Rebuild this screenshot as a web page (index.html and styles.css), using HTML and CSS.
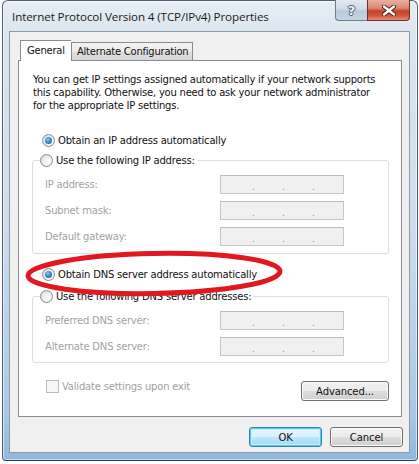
FILE: index.html
```html
<!DOCTYPE html>
<html>
<head>
<meta charset="utf-8">
<link rel="stylesheet" href="styles.css">
</head>
<body>
<div class="window">
  <div class="titlebar">
    <span class="title">Internet Protocol Version 4 (TCP/IPv4) Properties</span>
    <div class="caption-btns">
      <div class="cbtn help">?</div>
      <div class="cbtn close">
        <svg width="14" height="11" viewBox="0 0 14 11"><path d="M2 1.5 L12 9.5 M12 1.5 L2 9.5" stroke="#4a1a12" stroke-width="4.2" stroke-linecap="round"/><path d="M2 1.5 L12 9.5 M12 1.5 L2 9.5" stroke="#ffffff" stroke-width="2.4" stroke-linecap="round"/></svg>
      </div>
    </div>
  </div>
  <div class="client">
    <div class="tabs">
      <div class="tab active">General</div>
      <div class="tab">Alternate Configuration</div>
    </div>
    <div class="panel">
      <p class="intro">You can get IP settings assigned automatically if your network supports<br>this capability. Otherwise, you need to ask your network administrator<br>for the appropriate IP settings.</p>
      <div class="radio first"><span class="rb checked"></span>Obtain an IP address automatically</div>
      <fieldset class="group g1">
        <legend><span class="rb"></span>Use the following IP address:</legend>
        <div class="fields">
          <span class="lbl">IP address:</span><div class="ip"><i>.</i><i>.</i><i>.</i></div>
          <span class="lbl">Subnet mask:</span><div class="ip"><i>.</i><i>.</i><i>.</i></div>
          <span class="lbl">Default gateway:</span><div class="ip"><i>.</i><i>.</i><i>.</i></div>
        </div>
      </fieldset>
      <div class="radio dns"><span class="rb checked"></span>Obtain DNS server address automatically</div>
      <fieldset class="group g2">
        <legend><span class="rb"></span>Use the following DNS server addresses:</legend>
        <div class="fields">
          <span class="lbl">Preferred DNS server:</span><div class="ip"><i>.</i><i>.</i><i>.</i></div>
          <span class="lbl">Alternate DNS server:</span><div class="ip"><i>.</i><i>.</i><i>.</i></div>
        </div>
      </fieldset>
      <div class="footer">
        <div class="check"><span class="cb"></span>Validate settings upon exit</div>
        <div class="btn">Advanced...</div>
      </div>
    </div>
    <div class="dialog-btns">
      <div class="btn default">OK</div>
      <div class="btn">Cancel</div>
    </div>
  </div>
  <svg class="annotation" width="419" height="464" viewBox="0 0 419 464">
    <ellipse cx="154" cy="273.5" rx="126" ry="20" fill="none" stroke="#e01820" stroke-width="5" transform="rotate(-1 154 273.5)"/>
  </svg>
</div>
</body>
</html>
```

FILE: styles.css
```css
html, body {
  margin: 0;
  padding: 0;
  background: #ffffff;
}

body {
  font-family: "DejaVu Sans", sans-serif;
  font-size: 10px;
  color: #111;
}

.window {
  position: relative;
  box-sizing: border-box;
  margin-left: 2px;
  width: 416px;
  height: 461px;
  border: 1px solid #4d6073;
  border-bottom-color: #1d3f62;
  border-radius: 6px 6px 4px 4px;
  background: linear-gradient(to bottom, #e6edf4 0%, #dbe5ef 8%, #cddcec 50%, #a9c8e6 90%, #8fb7de 100%);
  box-shadow: inset 0 0 0 1px rgba(255,255,255,0.55);
}

.titlebar {
  height: 30px;
  display: flex;
  justify-content: space-between;
  align-items: flex-start;
  padding-left: 9px;
  padding-right: 7px;
}

.title {
  font-family: "Open Sans", sans-serif;
  font-size: 11.6px;
  color: #1a1a1a;
  line-height: 16px;
  margin-top: 8px;
  letter-spacing: -0.1px;
}

.caption-btns {
  display: flex;
  margin-top: -1px;
}

.cbtn {
  box-sizing: border-box;
  height: 21px;
  display: flex;
  align-items: center;
  justify-content: center;
}

.help {
  width: 32px;
  border: 1px solid #6d7e91;
  border-top: none;
  border-right: none;
  border-radius: 0 0 0 4px;
  background: linear-gradient(to bottom, #e2eaf2 0%, #cfdbe7 45%, #b8c9da 55%, #c6d5e4 100%);
  color: #f4f6f8;
  font-family: "DejaVu Sans", sans-serif;
  font-weight: bold;
  font-size: 13px;
  text-shadow: 0 0 1px #2d3d4e, 1px 0 0 #5a6878, -1px 0 0 #5a6878, 0 1px 0 #5a6878, 0 -1px 0 #5a6878;
}

.close {
  width: 43px;
  border: 1px solid #7a2a1f;
  border-top: none;
  border-radius: 0 0 4px 0;
  background: linear-gradient(to bottom, #eab0a2 0%, #d98a76 40%, #c4432c 55%, #cf5a40 80%, #e3907c 100%);
}

.client {
  box-sizing: border-box;
  margin: 0 7px 0 6px;
  height: 422px;
  border: 1px solid #8c9aaa;
  background: #f0f0f0;
  padding: 8px 7px 0 8px;
}

.tabs {
  display: flex;
  align-items: flex-end;
  padding-left: 2px;
  height: 20px;
  position: relative;
  z-index: 2;
}

.tab {
  box-sizing: border-box;
  border: 1px solid #898c95;
  border-bottom: none;
  padding: 0 4px 0 5px;
  height: 18px;
  line-height: 17px;
  white-space: nowrap;
  background: linear-gradient(to bottom, #f3f3f3 0%, #ebebeb 50%, #dedede 51%, #d7d7d7 100%);
  letter-spacing: -0.25px;
}

.tab.active {
  height: 21px;
  margin-bottom: -1px;
  background: #ffffff;
  border-right: none;
  padding: 0 6px 0 6px;
  line-height: 19px;
  width: 51px;
}

.panel {
  box-sizing: border-box;
  position: relative;
  border: 1px solid #898c95;
  background: #ffffff;
  height: 357px;
  padding: 0 12px 0 0;
}

.intro {
  margin: 0;
  padding: 12px 0 0 14px;
  line-height: 13px;
  white-space: nowrap;
  letter-spacing: -0.22px;
}

.radio, legend {
  display: flex;
  align-items: center;
  height: 16px;
  white-space: nowrap;
  letter-spacing: -0.2px;
}

.radio {
  margin-left: 23px;
}

.radio.first {
  margin-top: 20px;
}

.radio.dns {
  margin-top: 12px;
}

.rb {
  position: relative;
  box-sizing: border-box;
  width: 13px;
  height: 13px;
  border-radius: 50%;
  border: 1px solid #8a8c8e;
  background: radial-gradient(circle at 65% 65%, #ffffff 0%, #f2f2f2 35%, #d3d3d3 100%);
  margin-right: 3px;
  flex: none;
}

.rb.checked::after {
  content: "";
  position: absolute;
  left: 2px;
  top: 2px;
  width: 7px;
  height: 7px;
  border-radius: 50%;
  background: radial-gradient(circle at 40% 35%, #8ccaf4 0%, #3f8bcf 45%, #1b4f86 100%);
}

.group {
  margin: 4px 0 0 13px;
  padding: 0 0 7px 8px;
  border: 1px solid #d5dfe5;
  border-radius: 3px;
}

.group legend {
  padding: 0 2px 0 0;
  margin-left: -1px;
}

.group.g1 {
  margin-top: 4px;
}

.group.g2 {
  margin-top: 6px;
  padding-bottom: 6px;
}

.fields {
  display: grid;
  grid-template-columns: 175px 124px;
  row-gap: 7px;
  margin: 7px 0 0 4px;
  align-items: center;
}

.lbl {
  color: #a2a2a2;
  white-space: nowrap;
  letter-spacing: -0.2px;
}

.ip {
  box-sizing: border-box;
  height: 19px;
  border: 1px solid #c8c8c8;
  border-top-color: #bdbdbd;
  background: #f0f0f0;
  display: flex;
  padding-left: 31px;
  line-height: 22px;
  color: #8f8f8f;
}

.ip i {
  font-style: normal;
  width: 30px;
  font-size: 9px;
}

.footer {
  display: flex;
  justify-content: space-between;
  align-items: flex-start;
  margin: 18px 0 0 27px;
}

.check {
  display: flex;
  align-items: center;
  height: 13px;
  margin-top: -1px;
  color: #a0a0a0;
  letter-spacing: -0.2px;
}

.cb {
  box-sizing: border-box;
  width: 13px;
  height: 13px;
  border: 1px solid #bcbcbc;
  background: #f6f6f6;
  margin-right: 3px;
}

.btn {
  box-sizing: border-box;
  width: 88px;
  height: 20px;
  border: 1px solid #707070;
  border-radius: 3px;
  background: linear-gradient(to bottom, #f2f2f2 0%, #ebebeb 49%, #dddddd 50%, #cfcfcf 100%);
  box-shadow: inset 0 0 0 1px #fbfbfb;
  display: flex;
  align-items: center;
  justify-content: center;
  color: #111;
  letter-spacing: -0.1px;
}

.dialog-btns {
  display: flex;
  justify-content: flex-end;
  gap: 8px;
  margin-top: 10px;
  margin-right: -1px;
}

.dialog-btns .btn {
  width: 73px;
}

.btn.default {
  border-color: #3c7fb1;
  background: linear-gradient(to bottom, #e8f5fc 0%, #d9f0fc 49%, #bee6fd 50%, #a7d9f5 100%);
  box-shadow: inset 0 0 0 1px #48d0f8, inset 0 0 0 2px #c9ecfb;
}

.annotation {
  position: absolute;
  left: -3px;
  top: -1px;
  pointer-events: none;
  z-index: 5;
}
```
